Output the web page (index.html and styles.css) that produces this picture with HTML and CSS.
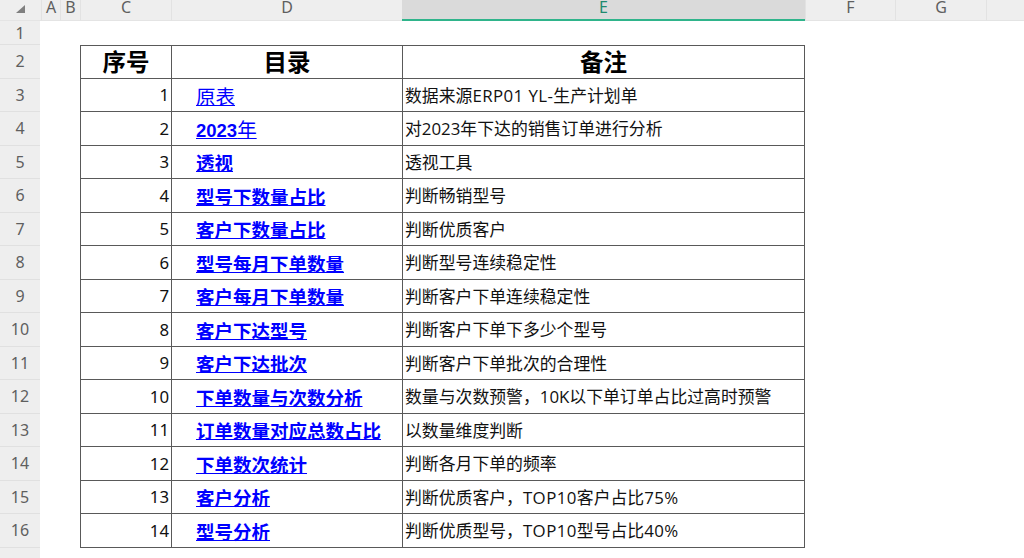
FILE: index.html
```html
<!DOCTYPE html>
<html lang="zh-CN">
<head>
<meta charset="utf-8">
<title>目录</title>
<link rel="stylesheet" href="styles.css">
</head>
<body>
<div class="sheet">
  <div class="ch corner"><svg width="10" height="9" viewBox="0 0 10 9"><path d="M9 0V8H0Z" fill="#7f7f7f"/></svg></div>
  <div class="ch">A</div><div class="ch">B</div><div class="ch">C</div><div class="ch">D</div><div class="ch sel">E</div><div class="ch">F</div><div class="ch">G</div><div class="ch"></div>

  <div class="rh">1</div>

  <div class="rh">2</div><div class="c hd first-row">序号</div><div class="d hd first-row">目录</div><div class="e hd first-row">备注</div>
  <div class="rh">3</div><div class="c num">1</div><div class="d"><a class="lnk serif lift">原表</a></div><div class="e">数据来源<span class="lat">ERP01 YL-</span>生产计划单</div>
  <div class="rh">4</div><div class="c num">2</div><div class="d"><a class="lnk nudge"><b class="yr">2023</b><span class="serif">年</span></a></div><div class="e">对2023年下达的销售订单进行分析</div>
  <div class="rh">5</div><div class="c num">3</div><div class="d"><a class="lnk">透视</a></div><div class="e">透视工具</div>
  <div class="rh">6</div><div class="c num">4</div><div class="d"><a class="lnk">型号下数量占比</a></div><div class="e">判断畅销型号</div>
  <div class="rh">7</div><div class="c num">5</div><div class="d"><a class="lnk">客户下数量占比</a></div><div class="e">判断优质客户</div>
  <div class="rh">8</div><div class="c num">6</div><div class="d"><a class="lnk">型号每月下单数量</a></div><div class="e">判断型号连续稳定性</div>
  <div class="rh">9</div><div class="c num">7</div><div class="d"><a class="lnk">客户每月下单数量</a></div><div class="e">判断客户下单连续稳定性</div>
  <div class="rh">10</div><div class="c num">8</div><div class="d"><a class="lnk">客户下达型号</a></div><div class="e">判断客户下单下多少个型号</div>
  <div class="rh">11</div><div class="c num">9</div><div class="d"><a class="lnk">客户下达批次</a></div><div class="e">判断客户下单批次的合理性</div>
  <div class="rh">12</div><div class="c num">10</div><div class="d"><a class="lnk">下单数量与次数分析</a></div><div class="e">数量与次数预警，10K以下单订单占比过高时预警</div>
  <div class="rh">13</div><div class="c num">11</div><div class="d"><a class="lnk">订单数量对应总数占比</a></div><div class="e">以数量维度判断</div>
  <div class="rh">14</div><div class="c num">12</div><div class="d"><a class="lnk">下单数次统计</a></div><div class="e">判断各月下单的频率</div>
  <div class="rh">15</div><div class="c num">13</div><div class="d"><a class="lnk">客户分析</a></div><div class="e">判断优质客户，<span class="lat">TOP10</span>客户占比<span class="lat">75%</span></div>
  <div class="rh">16</div><div class="c num">14</div><div class="d"><a class="lnk">型号分析</a></div><div class="e">判断优质型号，<span class="lat">TOP10</span>型号占比<span class="lat">40%</span></div>
  <div class="rh">17</div>
</div>
</body>
</html>
```
FILE: styles.css
```css
html, body {
  margin: 0;
  padding: 0;
  height: 100%;
  overflow: hidden;
  background: #fff;
}
.sheet {
  display: grid;
  grid-template-columns: 41px 19px 20px 91px 231px 403px 90px 91px 38px;
  grid-template-rows: 21px 24px repeat(15, 33.5px) 33px;
  width: 1024px;
  height: 558px;
  overflow: hidden;
  font-family: "Noto Sans", "Noto Sans CJK SC", sans-serif;
  color: #000;
}
.ch {
  display: flex;
  align-items: center;
  justify-content: center;
  height: 21px;
  box-sizing: border-box;
  background: #eeeeee;
  border-left: 1px solid #e2e2e2;
  border-bottom: 1px solid #e4e4e4;
  font-size: 16px;
  line-height: 15px;
  color: #5f5f5f;
  padding-bottom: 5px;
}
.corner {
  padding: 0 0 2px 0;
  border-left: 0;
}
.corner svg {
  display: block;
  margin-left: 1px;
}
.ch.sel {
  background: #dadada;
  color: #1e8a6e;
  border-left: 0;
  border-bottom: 2px solid #2fb48b;
}
.rh {
  grid-column: 1;
  display: flex;
  align-items: center;
  justify-content: center;
  box-sizing: border-box;
  width: 40px;
  background: #eeeeee;
  border-bottom: 1px solid #e0e0e0;
  font-size: 16px;
  color: #5f5f5f;
}
.c, .d, .e {
  display: flex;
  align-items: center;
  box-sizing: border-box;
  border-left: 1px solid #595959;
  border-bottom: 1px solid #595959;
  min-width: 0;
  white-space: nowrap;
}
.c { grid-column: 4; }
.d { grid-column: 5; padding-left: 24px; padding-top: 3px; }
.e {
  grid-column: 6;
  display: block;
  padding-left: 2px;
  font-family: "Open Sans", "Noto Sans CJK SC", sans-serif;
  font-size: 16.85px;
  line-height: 33px;
  color: #111;
  border-right: 1px solid #595959;
}
.lat { letter-spacing: 0.42px; }
.first-row { border-top: 1px solid #595959; }
.hd, .d.hd, .e.hd {
  display: flex;
  justify-content: center;
  padding: 0 0 1px 0;
  font-family: "Noto Sans CJK SC", sans-serif;
  font-size: 23.5px;
  font-weight: 700;
  line-height: 30px;
  color: #000;
}
.num {
  justify-content: flex-end;
  padding-right: 2px;
  font-size: 16.8px;
  color: #111;
}
.lnk {
  color: #0000ff;
  text-decoration: underline;
  font-size: 18.5px;
  font-weight: 700;
  line-height: 22px;
  cursor: pointer;
}
.lift { margin-top: 3px; }
.nudge { margin-top: 2px; }
.serif {
  font-family: "Liberation Serif", "Noto Sans CJK SC", serif;
  font-weight: 400;
  font-size: 19.5px;
}
.yr {
  font-family: "Liberation Sans", sans-serif;
  font-size: 18.5px;
}
```
